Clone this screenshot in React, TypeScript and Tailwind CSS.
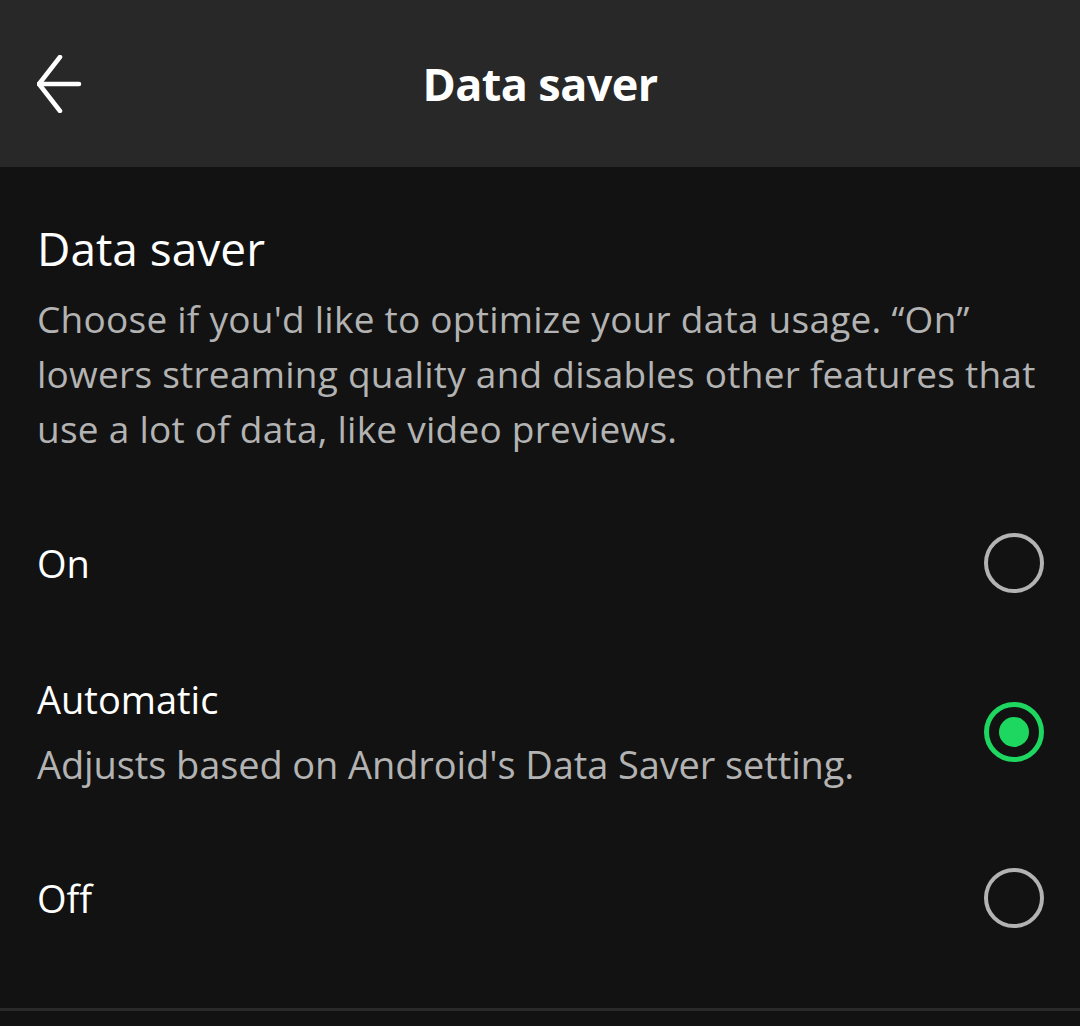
const font = { fontFamily: '"Open Sans", "Noto Sans", sans-serif' }

function Radio({ checked }: { checked?: boolean }) {
  if (checked) {
    return (
      <div className="w-[60px] h-[60px] rounded-full border-[5px] border-[#1ed760] flex items-center justify-center shrink-0">
        <div className="w-[30px] h-[30px] rounded-full bg-[#1ed760]" />
      </div>
    )
  }
  return <div className="w-[60px] h-[60px] rounded-full border-[4px] border-[#b3b3b3] shrink-0" />
}

export default function App() {
  return (
    <div className="w-[1080px] h-[1026px] bg-[#121212] text-white overflow-hidden flex flex-col" style={font}>
      <div className="h-[167px] bg-[#282828] flex items-center shrink-0">
        <div className="w-[120px] pl-[37px] flex items-center">
          <svg width="46" height="58" viewBox="0 0 46 58" fill="none" stroke="white" strokeWidth="4.5" strokeLinecap="round" strokeLinejoin="round">
            <path d="M23 2 L2 29 L23 56" />
            <path d="M2 29 H42" />
          </svg>
        </div>
        <div className="flex-1 text-center text-[45px] font-bold leading-none tracking-[-0.6px]">Data saver</div>
        <div className="w-[120px]" />
      </div>

      <div className="flex-1 flex flex-col pl-[37px] pr-[36px]">
        <div className="pt-[53px] text-[46px] leading-[56px]">Data saver</div>
        <div className="mt-[15px] text-[37px] leading-[55px] text-[#b3b3b3] tracking-[0.25px]">
          Choose if you'd like to optimize your data usage. “On”<br />
          lowers streaming quality and disables other features that<br />
          use a lot of data, like video previews.
        </div>

        <div className="mt-[77px] flex items-center justify-between h-[60px]">
          <div className="text-[38px] leading-[48px]">On</div>
          <Radio />
        </div>

        <div className="mt-[82px] flex items-center justify-between">
          <div className="flex flex-col">
            <div className="text-[38px] leading-[48px]">Automatic</div>
            <div className="mt-[17px] text-[38px] leading-[48px] text-[#b3b3b3] tracking-[-0.1px]">Adjusts based on Android's Data Saver setting.</div>
          </div>
          <Radio checked />
        </div>

        <div className="mt-[80px] flex items-center justify-between h-[60px]">
          <div className="text-[38px] leading-[48px]">Off</div>
          <Radio />
        </div>
      </div>

      <div className="h-[3px] bg-[#2a2a2a] shrink-0 mb-[15px]" />
    </div>
  )
}
